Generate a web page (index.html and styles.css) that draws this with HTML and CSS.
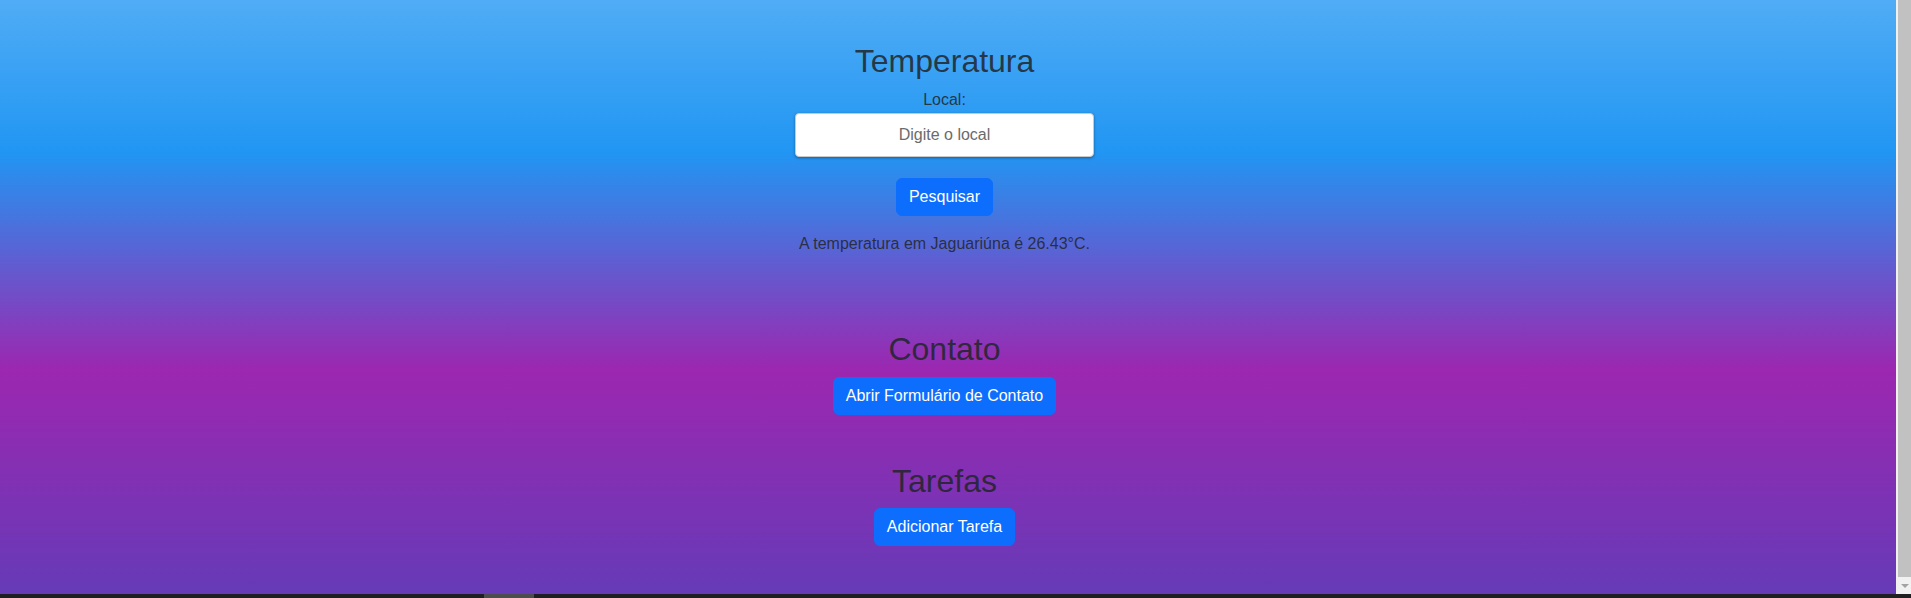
FILE: index.html
```html
<!DOCTYPE html>
<html lang="pt-BR">
<head>
<meta charset="utf-8">
<title>Temperatura</title>
<link rel="stylesheet" href="styles.css">
</head>
<body>
<div class="window">
  <div class="viewport">
    <main class="page">
      <section class="section temp">
        <h2 class="title">Temperatura</h2>
        <label class="label" for="local">Local:</label>
        <input class="field" id="local" type="text" placeholder="Digite o local">
        <button class="btn btn-search" type="button">Pesquisar</button>
        <p class="result">A temperatura em Jaguariúna é 26.43°C.</p>
      </section>
      <section class="section contact">
        <h2 class="title">Contato</h2>
        <button class="btn" type="button">Abrir Formulário de Contato</button>
      </section>
      <section class="section tasks">
        <h2 class="title">Tarefas</h2>
        <button class="btn" type="button">Adicionar Tarefa</button>
      </section>
    </main>
    <div class="vscroll">
      <div class="vscroll-thumb"></div>
      <div class="vscroll-arrow"><span class="tri"></span></div>
    </div>
  </div>
  <div class="hbar"><div class="hbar-thumb"></div></div>
</div>
</body>
</html>
```

FILE: styles.css
```css
* { box-sizing: border-box; }

html, body {
  margin: 0;
  padding: 0;
  height: 100%;
  overflow: hidden;
}

body {
  font-family: "Liberation Sans", Arial, sans-serif;
  font-size: 16px;
  line-height: 24px;
}

.window {
  display: flex;
  flex-direction: column;
  height: 598px;
  width: 1911px;
}

.viewport {
  flex: 1;
  display: flex;
  min-height: 0;
}

.page {
  flex: 1;
  padding: 42px 7px 0 0;
  text-align: center;
  color: rgba(33, 37, 41, 0.86);
  background: linear-gradient(to bottom,
    #50acf5 0px,
    #2196f3 152px,
    #9c27b0 370px,
    #673ab7 588px,
    #673ab7 100%);
}

.section {
  display: flex;
  flex-direction: column;
  align-items: center;
}

.contact { margin-top: 74px; }
.tasks { margin-top: 47px; }

.title {
  margin: 0 0 8px;
  font-size: 32px;
  font-weight: 400;
  line-height: 38.4px;
}

.label {
  display: block;
  line-height: 24px;
}

.field {
  display: block;
  width: 299px;
  height: 44px;
  margin: 1px 0 0;
  padding: 0 12px;
  border: 1px solid #c9c9c9;
  border-radius: 4px;
  background: #fff;
  font-family: inherit;
  font-size: 16px;
  text-align: center;
  color: #333;
  box-shadow: 0 1px 3px rgba(0, 0, 0, 0.35);
  outline: none;
}

.field::placeholder { color: #6b6b6b; }

.btn {
  display: inline-block;
  padding: 6px 12px;
  border: 1px solid #0d6efd;
  border-radius: 6px;
  background: #0d6efd;
  color: #fff;
  font-family: inherit;
  font-size: 16px;
  line-height: 24px;
  cursor: pointer;
}

.btn-search { margin-top: 21px; }

.result {
  margin: 16px 0 0;
  line-height: 24px;
}

.vscroll {
  width: 15px;
  display: flex;
  flex-direction: column;
  background: #f1f1f1;
  padding-left: 2px;
}

.vscroll-thumb {
  flex: 1;
  background: #c1c1c1;
}

.vscroll-arrow {
  height: 17px;
  display: flex;
  align-items: center;
  justify-content: center;
}

.tri {
  width: 0;
  height: 0;
  border-left: 4px solid transparent;
  border-right: 4px solid transparent;
  border-top: 4px solid #a3a3a3;
}

.hbar {
  height: 4px;
  background: #1f1f22;
  padding-left: 484px;
}

.hbar-thumb {
  width: 50px;
  height: 100%;
  background: #4d4d4d;
}
```
